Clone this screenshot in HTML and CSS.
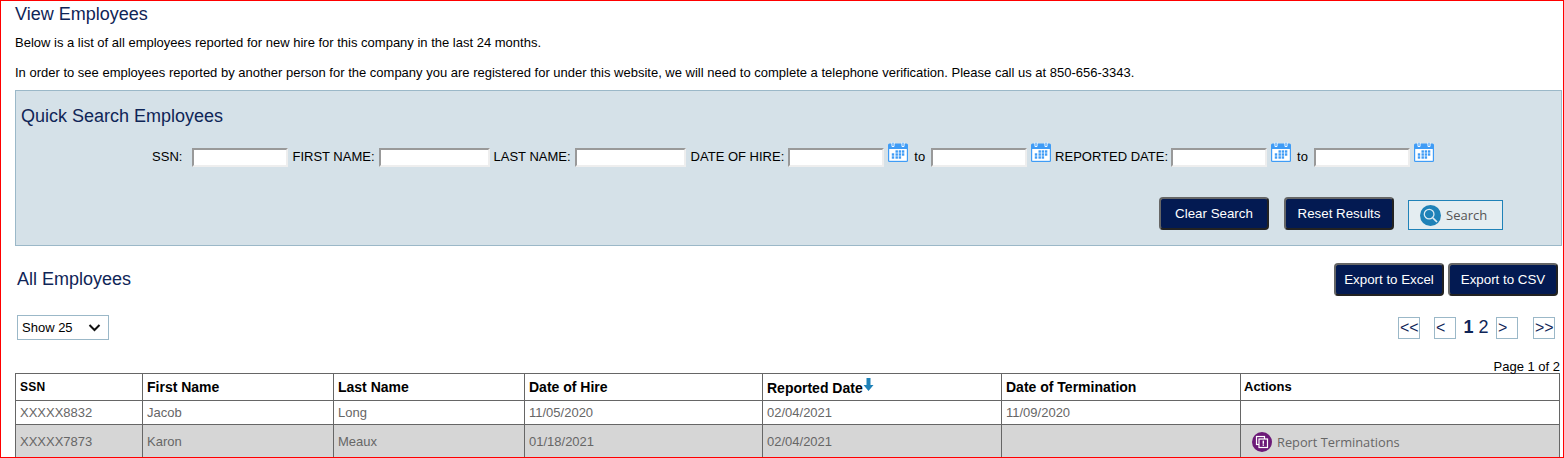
FILE: index.html
```html
<!DOCTYPE html>
<html lang="en">
<head>
<meta charset="utf-8">
<title>View Employees</title>
<link rel="stylesheet" href="styles.css">
</head>
<body>
<svg class="defs" width="0" height="0" aria-hidden="true">
  <symbol id="cal" viewBox="0 0 20 20">
    <rect x="0" y="1.5" width="20" height="18.5" rx="1.5" fill="#3f9cf6"/>
    <rect x="1.2" y="7" width="17.6" height="11.8" fill="#fff"/>
    <rect x="3.5" y="0" width="3" height="5" rx="1.2" fill="#fff"/>
    <rect x="13.5" y="0" width="3" height="5" rx="1.2" fill="#fff"/>
    <path d="M5 0.5v3.5M15 0.5v3.5" stroke="#3f9cf6" stroke-width="1.2"/>
    <g fill="#3f9cf6">
      <rect x="7.5" y="8.3" width="2.4" height="2.4"/><rect x="10.7" y="8.3" width="2.4" height="2.4"/><rect x="13.9" y="8.3" width="2.4" height="2.4"/>
      <rect x="3.8" y="11.3" width="2.4" height="2.4"/><rect x="7.5" y="11.3" width="2.4" height="2.4"/><rect x="10.7" y="11.3" width="2.4" height="2.4"/><rect x="13.9" y="11.3" width="2.4" height="2.4"/>
      <rect x="3.8" y="14.3" width="2.4" height="2.4"/><rect x="7.5" y="14.3" width="2.4" height="2.4"/><rect x="10.7" y="14.3" width="2.4" height="2.4"/>
    </g>
  </symbol>
</svg>
<main class="page">
  <h1 class="heading">View Employees</h1>
  <p class="intro first">Below is a list of all employees reported for new hire for this company in the last 24 months.</p>
  <p class="intro second">In order to see employees reported by another person for the company you are registered for under this website, we will need to complete a telephone verification. Please call us at 850-656-3343.</p>

  <section class="panel">
    <h2 class="heading panel-title">Quick Search Employees</h2>
    <div class="fields">
      <label class="lbl gap-ssn">SSN:</label><input class="box narrow" type="text">
      <label class="lbl gap-s">FIRST NAME:</label><input class="box wide" type="text">
      <label class="lbl gap-s">LAST NAME:</label><input class="box wide" type="text">
      <label class="lbl gap-d">DATE OF HIRE:</label><input class="box narrow" type="text">
      <svg class="cal"><use href="#cal"/></svg><span class="to">to</span><input class="box narrow" type="text">
      <svg class="cal"><use href="#cal"/></svg>
      <label class="lbl gap-r">REPORTED DATE:</label><input class="box narrow" type="text">
      <svg class="cal"><use href="#cal"/></svg><span class="to">to</span><input class="box narrow" type="text">
      <svg class="cal"><use href="#cal"/></svg>
    </div>
    <div class="actions">
      <button class="btn">Clear Search</button>
      <button class="btn">Reset Results</button>
      <button class="search-btn">
        <svg class="search-icon" viewBox="0 0 20 20"><circle cx="10" cy="10" r="10" fill="#1f82b8"/><circle cx="8.7" cy="8.7" r="4.6" fill="none" stroke="#dcebf3" stroke-width="1.2"/><path d="M12.2 12.2l4 4" stroke="#dcebf3" stroke-width="1.6"/></svg>
        <span>Search</span>
      </button>
    </div>
  </section>

  <div class="list-head">
    <h2 class="heading list-title">All Employees</h2>
    <div class="exports">
      <button class="btn">Export to Excel</button>
      <button class="btn">Export to CSV</button>
    </div>
  </div>

  <div class="list-tools">
    <div class="show">
      <span>Show 25</span>
      <svg class="chev" viewBox="0 0 12 8"><path d="M1 1l5 5 5-5" fill="none" stroke="#111" stroke-width="2"/></svg>
    </div>
    <nav class="pager">
      <a class="pg pg-first">&lt;&lt;</a>
      <a class="pg pg-prev">&lt;</a>
      <span class="num"><b>1</b> 2</span>
      <a class="pg pg-next">&gt;</a>
      <a class="pg pg-last">&gt;&gt;</a>
    </nav>
  </div>
  <div class="page-of">Page 1 of 2</div>

  <table class="grid">
    <colgroup>
      <col class="c1"><col class="c2"><col class="c3"><col class="c4"><col class="c5"><col class="c6"><col class="c7">
    </colgroup>
    <thead>
      <tr>
        <th class="spaced">SSN</th><th>First Name</th><th>Last Name</th><th>Date of Hire</th>
        <th>Reported Date<svg class="sort" viewBox="0 0 10 14"><path d="M3 0h4v7h3l-5 6-5-6h3z" fill="#1f82b8"/></svg></th>
        <th>Date of Termination</th><th class="act-h">Actions</th>
      </tr>
    </thead>
    <tbody>
      <tr class="r1"><td>XXXXX8832</td><td>Jacob</td><td>Long</td><td>11/05/2020</td><td>02/04/2021</td><td>11/09/2020</td><td></td></tr>
      <tr class="r2"><td>XXXXX7873</td><td>Karon</td><td>Meaux</td><td>01/18/2021</td><td>02/04/2021</td><td></td>
        <td><span class="report">
          <svg class="report-icon" viewBox="0 0 20 20"><circle cx="10" cy="10" r="10" fill="#6c1a78"/><rect x="4.5" y="4.5" width="8" height="8" fill="none" stroke="#fff" stroke-width="1.2"/><rect x="7" y="7" width="8.5" height="8.5" fill="#6c1a78" stroke="#fff" stroke-width="1.2"/><rect x="10.6" y="8.6" width="1.4" height="3.2" fill="#fff"/><rect x="10.6" y="12.4" width="1.4" height="1.4" fill="#fff"/></svg>
          <span>Report Terminations</span></span></td></tr>
    </tbody>
  </table>
</main>
</body>
</html>
```
FILE: styles.css
```css
* { box-sizing: border-box; }
html, body { margin: 0; padding: 0; background: #fff; }
body { font-family: "Liberation Sans", Arial, sans-serif; font-size: 13px; color: #000; }
.defs { position: absolute; }
.page {
  width: 1564px; height: 458px; overflow: hidden;
  border: 1px solid #f00;
  padding: 0 0 0 14px;
}
.heading { font-weight: 400; font-size: 18px; line-height: 22px; color: #0f2557; margin: 0; }
h1.heading { padding-top: 2px; }
.intro { margin: 0; line-height: 15px; }
.intro.first { margin-top: 10px; }
.intro.second { margin-top: 15px; }

.panel {
  width: 1547px; height: 156px; margin-top: 10px;
  background: #d5e1e8; border: 1px solid #9bb8c8;
  padding: 14px 0 0 5px;
}
.fields { display: flex; align-items: flex-start; justify-content: center; margin-top: 15px; padding-left: 4px; height: 30px; }
.lbl { line-height: 18px; margin-top: 6px; }
.gap-ssn { margin-right: 10px; }
.gap-s { margin-left: 4px; margin-right: 4px; }
.gap-d { margin-left: 5px; margin-right: 4px; }
.gap-r { margin-left: 4px; margin-right: 3px; }
.to { line-height: 18px; margin: 6px 6px 0 6px; }
.box { height: 19px; margin-top: 6px; padding: 0; background: #fff; border: 2px solid; border-color: #999 #eee #eee #999; border-radius: 0; }
.narrow { width: 96px; }
.wide { width: 111px; }
.cal { width: 20px; height: 20px; margin-left: 4px; flex: none; }

.actions { display: flex; justify-content: flex-end; align-items: flex-end; gap: 15px; padding-right: 58px; margin-top: 25px; }
.btn {
  width: 110px; height: 33px; padding: 0;
  font: 13.33px "Liberation Sans", Arial, sans-serif;
  background: #031a52; color: #fff;
  border: 2px solid; border-color: #666 #222 #222 #666; border-radius: 4px;
}
.search-btn {
  width: 95px; height: 30px; padding: 0 0 0 11px; margin-left: -1px;
  display: flex; align-items: center; gap: 5px;
  background: #e4edf1; border: 1px solid #1f82b8; color: #555;
  font: 13px "Open Sans", sans-serif;
}
.search-icon { width: 21px; height: 21px; }

.list-head { display: flex; justify-content: space-between; align-items: center; width: 1543px; margin-top: 17px; height: 33px; }
.list-title { padding-left: 2px; padding-bottom: 2px; }
.exports { display: flex; gap: 4px; }

.list-tools { display: flex; justify-content: space-between; align-items: center; width: 1540px; margin-top: 19px; height: 25px; padding-left: 2px; }
.show {
  width: 92px; height: 25px; display: flex; align-items: center; justify-content: space-between;
  border: 1px solid #9bb8c8; padding: 0 7px 0 4px;
}
.chev { width: 13px; height: 8px; }
.pager { display: flex; align-items: center; }
.pg {
  width: 22px; height: 22px; display: flex; align-items: center; justify-content: flex-start;
  padding-left: 1px;
  border: 1px solid #9bb8c8; color: #0f2557; font-size: 16px;
}
.pg-prev { margin-left: 14px; }
.num { width: 40px; text-align: center; font-size: 18px; color: #0f2557; }
.num b { font-weight: 700; }
.pg-last { margin-left: 15px; }

.page-of { width: 1545px; text-align: right; line-height: 13px; margin-top: 20px; }

.grid { width: 1544px; table-layout: fixed; border-collapse: collapse; }
.c1 { width: 127px; } .c2 { width: 191px; } .c3 { width: 191px; } .c4 { width: 238px; }
.c5 { width: 239px; } .c6 { width: 239px; } .c7 { width: 319px; }
.grid th, .grid td { border: 1px solid #666; text-align: left; padding: 0 4px; font-family: "Liberation Sans", Arial, sans-serif; }
.grid th { height: 27px; font-size: 14px; color: #000; }
.grid th.spaced { font-size: 12px; letter-spacing: 0.2px; padding-bottom: 1px; }
.grid th.act-h { font-size: 13px; padding-bottom: 2px; padding-left: 3px; }
.grid td { font-size: 13px; color: #666; }
.r1 td { height: 24px; }
.r2 td { height: 34px; background: #d6d6d6; }
.sort { width: 11px; height: 14px; vertical-align: 1px; }
.report { display: flex; align-items: center; gap: 5px; padding-left: 7px; font: 12.8px "Open Sans", sans-serif; color: #666; }
.report-icon { width: 20px; height: 20px; }
```
